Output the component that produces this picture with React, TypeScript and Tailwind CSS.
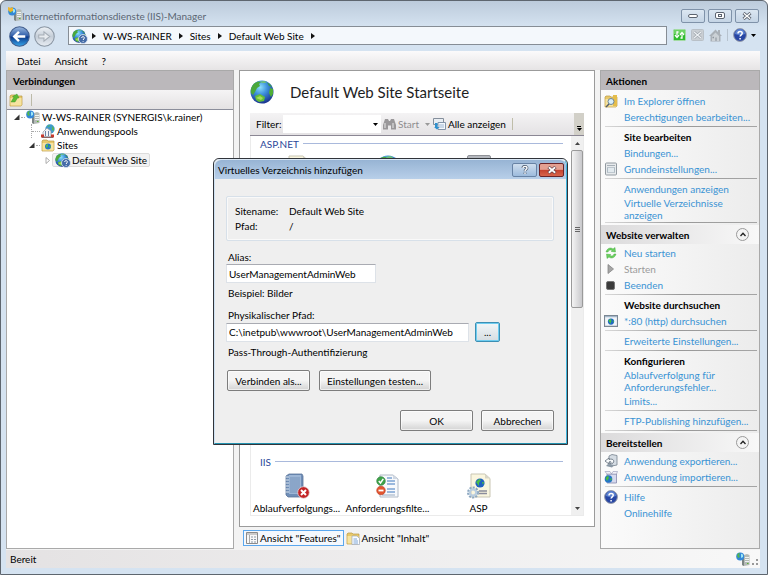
import type { ReactNode } from 'react';

function Globe({ className = 'size-4' }: { className?: string }) {
  return (
    <svg viewBox="0 0 24 24" className={`shrink-0 ${className}`} aria-hidden="true">
      <defs>
        <radialGradient id="sea" cx="0.42" cy="0.3" r="0.75">
          <stop offset="0" stopColor="#8fe0fa" />
          <stop offset="0.4" stopColor="#3f93de" />
          <stop offset="1" stopColor="#152a86" />
        </radialGradient>
      </defs>
      <circle cx="12" cy="12" r="11.5" fill="url(#sea)" />
      <path d="M1 13C0 8 3 3 8 1.5L11 2 9 4 10 6 7 8 5 12 3 15Z" fill="#4aa83c" />
      <path d="M10 1.5L14 1 17 2 15 3 12 3Z" fill="#6fc07a" />
      <path d="M17 2.5C20 4 21 5 22 7L19 6Z" fill="#3b9a48" />
      <path d="M20 8L23 9 23 14 21 17 19 13Z" fill="#4fae35" />
      <path d="M5 16L10 14 15 17 14 21 9 22 6 20Z" fill="#63be38" />
      <path d="M6 18L10 16 13 18 11 20Z" fill="#a5dd5b" />
    </svg>
  );
}

function SiteIcon({ className = 'size-3.5' }: { className?: string }) {
  return (
    <span className="relative flex shrink-0">
      <Globe className={className} />
      <svg viewBox="0 0 10 10" className="absolute -right-0.5 -bottom-px size-2.5" aria-hidden="true">
        <circle cx="5" cy="5" r="4.5" fill="#456ca8" stroke="#dfe8f4" strokeWidth="0.8" />
        <path d="M3.6 4C3.6 2.2 6.5 2.3 6.4 4 6.4 4.8 5.1 5 5.1 6M5.1 7v.8" fill="none" stroke="#fff" strokeWidth="1" />
      </svg>
    </span>
  );
}

function ServerIcon({ badge = false }: { badge?: boolean }) {
  return (
    <svg viewBox="0 0 14 14" className="size-3.5 shrink-0" aria-hidden="true">
      <path d="M6 3.5L11 2 13.5 3V13L8 14 6 13Z" fill="#b4bab6" />
      <path d="M6 3.5L8 4.2V14L6 13Z" fill="#7b8482" />
      <path d="M9 5.5H13M9 7.5H13M9 9.5H13" stroke="#eff2f0" />
      <path d="M11 11.5h1.5" stroke="#59b72f" />
      <circle cx="4.2" cy="4.4" r="4" fill="#3388d8" />
      <path d="M1 3Q3 0 4 1L3 3 4 5 2 6Z" fill="#53b64b" />
      <path d="M5 2Q6 1 7 3L7 5 5 6Z" fill="#9ce6f4" />
      {badge && <path d="M0 0L3 1 5 0 5 4 2 5 0 3Z" fill="#edb52e" />}
    </svg>
  );
}

function FolderIcon({ kind }: { kind: 'up' | 'site' | 'search' | 'content' }) {
  return (
    <svg viewBox="0 0 14 14" className="size-3.5 shrink-0" aria-hidden="true">
      <path d="M1 3L2 2H6L7 3H13V12L12 13H1Z" fill="#e8c96b" stroke="#b99945" strokeWidth="0.7" />
      <path d="M1.5 5H12.5V12.5H1.5Z" fill="#f6e3a0" />
      {kind === 'up' && <path d="M2 9L5 4 3.5 3.5 8 1 10 5 8.5 5 6 9Z" fill="#5cbb34" stroke="#338a25" strokeWidth="0.4" />}
      {kind === 'site' && (
        <>
          <circle cx="7" cy="8.5" r="3" fill="#2476c7" />
          <path d="M5 7L7 6 7 8 6 10 5 9ZM8 8L10 8 9 10Z" fill="#52bf42" />
        </>
      )}
      {kind === 'search' && (
        <>
          <path d="M9 1H13V12H9Z" fill="#e5bd4a" />
          <circle cx="7" cy="7.5" r="3" fill="#d8eefa" stroke="#6d8595" />
          <path d="M5 10L2 13" stroke="#525d66" strokeWidth="1.5" />
        </>
      )}
      {kind === 'content' && (
        <>
          <path d="M6 5H11L13.5 7.5V13.5H6Z" fill="#fafcff" stroke="#909db0" strokeWidth="0.6" />
          <path d="M7.5 8H11M7.5 10H12M7.5 12H12" stroke="#6193cb" strokeWidth="0.8" />
        </>
      )}
    </svg>
  );
}

function PoolsIcon() {
  return (
    <svg viewBox="0 0 14 14" className="size-3.5 shrink-0" aria-hidden="true">
      <circle cx="9" cy="5" r="4.7" fill="#3d9bcc" />
      <path d="M6 2L9 1 8 3ZM11 2L13 4 13 7 11 6Z" fill="#59b55c" />
      <path d="M2 8L6 4 10 7V12.5H2Z" fill="#f2f3f6" stroke="#8b929e" strokeWidth="0.7" />
      <path d="M4.5 7V12M7.5 7V12" stroke="#6b83a4" strokeWidth="1" />
      <path d="M0 10.5H3V13.5H0ZM10 10.5H13V13.5H10Z" fill="#c7392d" />
      <path d="M1 13.5H12" stroke="#8d6562" />
    </svg>
  );
}

function HelpIcon({ className = 'size-3.5' }: { className?: string }) {
  return (
    <svg viewBox="0 0 14 14" className={`shrink-0 ${className}`} aria-hidden="true">
      <circle cx="7" cy="7" r="6.4" fill="#2746a4" stroke="#969caa" strokeWidth="1" />
      <path d="M2 6A5 5 0 0 1 12 6Q7 8 2 6Z" fill="#5c82d0" />
      <path d="M5 5.5C5 2.8 9.3 2.9 9.2 5.3 9.2 6.8 7.1 6.9 7.1 8.6M7.1 10v1.4" fill="none" stroke="#fff" strokeWidth="1.5" />
    </svg>
  );
}

function DialogIcon() {
  return (
    <svg viewBox="0 0 12 13" className="h-3.5 w-3" aria-hidden="true">
      <rect x="0.5" y="0.5" width="11" height="12" rx="1" fill="#e8ebed" stroke="#929aa1" />
      <path d="M2 3H10" stroke="#a7b0b8" />
      <path d="M2.5 5H9.5V10H2.5Z" fill="#d5dfe6" stroke="#9ba9b3" strokeWidth="0.7" />
      <path d="M4 5V10M6 5V10M8 5V10" stroke="#f7fafb" strokeWidth="0.8" />
    </svg>
  );
}

function RestartIcon() {
  return (
    <svg viewBox="0 0 12 12" className="size-3" aria-hidden="true">
      <path d="M1 5C2 1 6 0 8 2L10 0.5 10.5 5 6.2 4.4 7.2 3.5C5 2.5 3.5 3.2 3 5ZM11 7C10 11 6 12 4 10L2 11.5 1.5 7 5.8 7.6 4.8 8.5C7 9.5 8.5 8.8 9 7Z" fill="#6bcf5f" stroke="#3aa535" strokeWidth="0.4" />
    </svg>
  );
}

function BrowseIcon() {
  return (
    <svg viewBox="0 0 13 11" className="h-3 w-3.5" aria-hidden="true">
      <path d="M0.5 0.5H12.5V10.5H0.5Z" fill="#f1f5f9" stroke="#7b8793" />
      <path d="M1 1.5H12" stroke="#9aafc4" />
      <circle cx="6.5" cy="6" r="2.9" fill="#2069c4" />
      <path d="M4 5L6 3.5 7 5 6 8ZM8 6L9 5 9 7Z" fill="#46c141" />
    </svg>
  );
}

function ExportIcon() {
  return (
    <svg viewBox="0 0 14 14" className="size-3.5" aria-hidden="true">
      <path d="M5 2L8 0.5 13 1.5V11L8 12 5 10Z" fill="#d5dce3" stroke="#76818d" strokeWidth="0.8" />
      <path d="M1 7L5 4V5.5C9 4 11 7 9 9 8 10 6 10 6 10 8 8 7 7 5 8V10Z" fill="#f8fafb" stroke="#5d6a77" strokeWidth="0.8" />
      <path d="M2 12L4 10 10 11 8 13.5Z" fill="#8a98a5" />
    </svg>
  );
}

function ImportIcon() {
  return (
    <svg viewBox="0 0 14 14" className="size-3.5" aria-hidden="true">
      <path d="M3 4H12.5V13H3Z" fill="#d6daee" stroke="#8588ac" strokeWidth="0.8" />
      <path d="M3 4L1 1.5H6L7.5 4 9 1.5H13.5L12.5 4Z" fill="#f1f1f8" stroke="#9497b4" strokeWidth="0.6" />
      <circle cx="4.5" cy="9" r="3.8" fill="#2575c8" />
      <path d="M1.5 8L4 5.5 5 8 3 11ZM6 9L8 8 7 11Z" fill="#4abc3c" />
    </svg>
  );
}

type Action = { label: string; icon?: ReactNode; bold?: boolean; disabled?: boolean; tall?: boolean };

const siteActions: Action[][] = [
  [{ label: 'Im Explorer öffnen', icon: <FolderIcon kind="search" /> }, { label: 'Berechtigungen bearbeiten...' }],
  [
    { label: 'Site bearbeiten', bold: true },
    { label: 'Bindungen...' },
    { label: 'Grundeinstellungen...', icon: <DialogIcon /> },
  ],
  [{ label: 'Anwendungen anzeigen' }, { label: 'Virtuelle Verzeichnisse anzeigen', tall: true }],
];

const manageActions: Action[][] = [
  [
    { label: 'Neu starten', icon: <RestartIcon /> },
    {
      label: 'Starten',
      disabled: true,
      icon: (
        <svg viewBox="0 0 8 10" className="h-2.5 w-2" aria-hidden="true">
          <path d="M1 0.5L6.5 5 1 9.5Z" fill="#a6a6a6" stroke="#858585" strokeWidth="0.8" />
        </svg>
      ),
    },
    { label: 'Beenden', icon: <span className="size-[9px] rounded-xs border border-[#777] bg-[#3b3b3b]" /> },
  ],
  [
    { label: 'Website durchsuchen', bold: true },
    { label: '*:80 (http) durchsuchen', icon: <BrowseIcon /> },
  ],
  [{ label: 'Erweiterte Einstellungen...' }],
  [
    { label: 'Konfigurieren', bold: true },
    { label: 'Ablaufverfolgung für Anforderungsfehler...', tall: true },
    { label: 'Limits...' },
  ],
  [{ label: 'FTP-Publishing hinzufügen...' }],
];

const deployActions: Action[][] = [
  [
    { label: 'Anwendung exportieren...', icon: <ExportIcon /> },
    { label: 'Anwendung importieren...', icon: <ImportIcon /> },
  ],
  [{ label: 'Hilfe', icon: <HelpIcon /> }, { label: 'Onlinehilfe' }],
];

function Divider() {
  return (
    <div className="mr-0.5 ml-1 h-1 pt-px">
      <div className="h-px bg-linear-to-r from-[#d8d8d8] via-[#999] to-[#a5a5a5]" />
    </div>
  );
}

function ActionGroups({ groups }: { groups: Action[][] }) {
  return groups.map((group, i) => (
    <div key={group[0].label}>
      {i > 0 && <Divider />}
      {group.map((action) => (
        <div key={action.label} className={`flex ${action.tall ? 'h-6 items-start' : 'h-4 items-center'}`}>
          <span className="flex w-[23px] shrink-0 justify-center pr-1">{action.icon}</span>
          {action.bold ? (
            <h3 className="font-bold text-black">{action.label}</h3>
          ) : action.disabled ? (
            <span className="text-[#9b9b9b]">{action.label}</span>
          ) : (
            <a href="#" className={`text-[#3a93d4] ${action.tall ? 'w-28' : 'whitespace-nowrap'}`}>
              {action.label}
            </a>
          )}
        </div>
      ))}
    </div>
  ));
}

function SectionHeader({ title }: { title: string }) {
  return (
    <>
      <Divider />
      <div className="mb-px flex h-[19px] items-center justify-between bg-linear-to-r from-[#dcdbdc] to-[#f8f8f8] pr-2.5 pl-[5px]">
        <h2 className="font-bold text-black">{title}</h2>
        <button aria-label={`${title} einklappen`} className="flex size-[13px] items-center justify-center rounded-full border border-[#9a9a9a] bg-[#f4f4f4]">
          <svg viewBox="0 0 6 5" className="h-[5px] w-1.5" aria-hidden="true">
            <path d="M0.5 4L3 1.2 5.5 4" fill="none" stroke="#222" strokeWidth="1.3" />
          </svg>
        </button>
      </div>
    </>
  );
}

function Caret({ className = 'text-black' }: { className?: string }) {
  return (
    <svg viewBox="0 0 5 3" className={`h-[3px] w-[5px] shrink-0 ${className}`} aria-hidden="true">
      <path d="M0 0H5L2.5 3Z" fill="currentColor" />
    </svg>
  );
}

function Crumb() {
  return (
    <svg viewBox="0 0 4 6" className="h-1.5 w-1 shrink-0" aria-hidden="true">
      <path d="M0 0L4 3 0 6Z" fill="#111" />
    </svg>
  );
}

function Expander({ open = false }: { open?: boolean }) {
  return (
    <svg viewBox="0 0 6 7" className="h-[7px] w-1.5 shrink-0" aria-hidden="true">
      {open ? <path d="M5.5 0.5V6H0Z" fill="#333" /> : <path d="M1 0.5L4.5 3.5 1 6.5Z" fill="#fff" stroke="#999" strokeWidth="0.8" />}
    </svg>
  );
}

function NavArrow({ back = false }: { back?: boolean }) {
  return (
    <button aria-label={back ? 'Zurück' : 'Vorwärts'} disabled={!back} className="shrink-0">
      <svg viewBox="0 0 20 20" className="size-[21px]" aria-hidden="true">
        <defs>
          <linearGradient id="back" x2="0" y2="1">
            <stop offset="0" stopColor="#9bb9df" />
            <stop offset="0.48" stopColor="#2e5ca9" />
            <stop offset="0.52" stopColor="#0b3789" />
            <stop offset="1" stopColor="#38a8ec" />
          </linearGradient>
          <linearGradient id="forward" x2="0" y2="1">
            <stop offset="0" stopColor="#eef2f6" />
            <stop offset="0.5" stopColor="#c5ced8" />
            <stop offset="1" stopColor="#e8edf3" />
          </linearGradient>
        </defs>
        <circle cx="10" cy="10" r="9.3" fill={back ? 'url(#back)' : 'url(#forward)'} stroke={back ? '#435f8e' : '#8995a2'} />
        {back ? (
          <path d="M15.5 10H5.5M9.5 5.5L5 10 9.5 14.5" fill="none" stroke="#fff" strokeWidth="2.3" />
        ) : (
          <path d="M4.5 8.5H9.5V5.5L15 10 9.5 14.5V11.5H4.5Z" fill="#e7ebef" stroke="#a5adb6" />
        )}
      </svg>
    </button>
  );
}

const frameButton =
  'flex h-3.5 w-6 items-center justify-center rounded-xs border border-[#7f92a9] bg-linear-to-b from-[#dce7f2] to-[#c4d4e5]';

function TitleBar() {
  return (
    <header className="flex h-[25px] items-center pr-2 pl-[7px]">
      <ServerIcon badge />
      <h1 className="flex-1 pt-1 text-[#5b6673]">Internetinformationsdienste (IIS)-Manager</h1>
      <div className="flex gap-[3px] pt-1">
        <button aria-label="Minimieren" className={frameButton}>
          <span className="h-1 w-2.5 rounded-xs border border-[#5c6470] bg-white" />
        </button>
        <button aria-label="Maximieren" className={frameButton}>
          <span className="flex h-[7px] w-2.5 items-center justify-center rounded-xs border border-[#5c6470] bg-white">
            <span className="h-[3px] w-1 border border-[#5c6470]" />
          </span>
        </button>
        <button aria-label="Schließen" className={frameButton}>
          <svg viewBox="0 0 10 8" className="h-2 w-2.5" aria-hidden="true">
            <path d="M1.5 1L8.5 7M8.5 1L1.5 7" stroke="#5c6470" strokeWidth="3" />
            <path d="M1.8 1.2L8.2 6.8M8.2 1.2L1.8 6.8" stroke="#fff" strokeWidth="1.3" />
          </svg>
        </button>
      </div>
    </header>
  );
}

function AddressBar() {
  return (
    <nav className="flex h-[25px] items-start pr-[11px] pl-2">
      <div className="flex gap-1">
        <NavArrow back />
        <NavArrow />
      </div>
      <div className="ml-[13px] flex h-[19px] flex-1 items-center border border-[#868d95] bg-[#f4f8fc] pl-[3px]">
        <SiteIcon />
        <div className="ml-1.5 flex items-center gap-[7px] text-black">
          <Crumb />
          <a href="#">W-WS-RAINER</a>
          <Crumb />
          <a href="#">Sites</a>
          <Crumb />
          <a href="#">Default Web Site</a>
          <Crumb />
        </div>
      </div>
      <div className="ml-1.5 flex h-[18px] items-center gap-[5px]">
        <button aria-label="Aktualisieren">
          <svg viewBox="0 0 13 12" className="h-3 w-[13px]" aria-hidden="true">
            <rect x="0.5" y="0.5" width="12" height="11" rx="1" fill="#2fbb2f" stroke="#a3dba2" />
            <path d="M1 1H12V5H1Z" fill="#6bd364" />
            <path d="M5.5 3H4V6.5M2 6L4 8.5 6 6M7.5 9H9V5.5M7 6L9 3.5 11 6" fill="none" stroke="#fff" strokeWidth="1.3" />
          </svg>
        </button>
        <button aria-label="Stopp" disabled>
          <svg viewBox="0 0 13 12" className="h-3 w-[13px]" aria-hidden="true">
            <rect x="0.5" y="0.5" width="12" height="11" rx="1" fill="#c9ced3" stroke="#b9c0c7" />
            <path d="M3 3L10 9M10 3L3 9" stroke="#9fa6ad" strokeWidth="2.6" />
            <path d="M3 3L10 9M10 3L3 9" stroke="#eef1f4" strokeWidth="1.2" />
          </svg>
        </button>
        <button aria-label="Startseite" disabled>
          <svg viewBox="0 0 13 13" className="size-[13px]" aria-hidden="true">
            <path d="M0 7L6.5 0.5 9 3V1H11V5L13 7 11.5 7V12.5H1.5V7Z" fill="#a9b0b7" />
            <path d="M3 7L6.5 3.5 10 7V12H8V8.5H6V12H3Z" fill="#cbd1d6" />
            <path d="M3.5 8.5H5" stroke="#8e969e" strokeWidth="1.5" />
          </svg>
        </button>
        <span className="h-3 w-px bg-[#b7c3cf]" />
        <button aria-label="Hilfe" className="flex items-center gap-1">
          <HelpIcon />
          <Caret />
        </button>
      </div>
    </nav>
  );
}

function Connections() {
  return (
    <section className="flex w-[228px] shrink-0 flex-col border border-[#a9a9a9] bg-white">
      <h2 className="flex h-[19px] items-center bg-[#bbb8bb] pl-1.5 font-bold text-black">Verbindungen</h2>
      <div className="flex h-5 items-center gap-2 border-b border-[#8b8e9b] bg-linear-to-b from-[#f5f4f5] to-[#e4e2e3] pl-0.5">
        <button aria-label="Verbinden">
          <FolderIcon kind="up" />
        </button>
        <span className="h-3 w-px bg-[#bcbaa8]" />
      </div>
      <ul className="text-black">
        <li className="flex h-3.5 items-center pl-[7px]">
          <Expander open />
          <span className="mr-px ml-px w-1 border-t border-dotted border-[#aaa]" />
          <ServerIcon />
          <span className="ml-0.5">W-WS-RAINER (SYNERGIS\k.rainer)</span>
        </li>
        <li className="flex h-3.5 items-center pl-6">
          <span className="h-3.5 border-l border-dotted border-[#aaa]" />
          <span className="mr-px w-2 border-t border-dotted border-[#aaa]" />
          <PoolsIcon />
          <span className="ml-0.5">Anwendungspools</span>
        </li>
        <li className="flex h-3.5 items-center pl-[22px]">
          <Expander open />
          <span className="mr-px ml-px w-1 border-t border-dotted border-[#aaa]" />
          <FolderIcon kind="site" />
          <span className="ml-0.5">Sites</span>
        </li>
        <li className="flex h-4 items-center pl-[38px]">
          <Expander />
          <span className="ml-px flex h-3.5 items-center rounded-xs border border-[#dcdcdc] bg-[#f2f2f2] pr-0.5 pl-0.5">
            <SiteIcon />
            <span className="ml-[3px]">Default Web Site</span>
          </span>
        </li>
      </ul>
    </section>
  );
}

function GroupTitle({ children }: { children: ReactNode }) {
  return (
    <h3 className="flex h-[15px] items-center gap-1 pr-2 pl-[9px] text-[#2b4799]">
      {children}
      <span className="h-px flex-1 bg-[#a9b9dc]" />
    </h3>
  );
}

function Feature({ label, icon }: { label: string; icon: ReactNode }) {
  return (
    <a href="#" className="flex w-[91px] flex-col items-center gap-[3px] text-black">
      {icon}
      <span className="h-3 whitespace-nowrap">{label}</span>
    </a>
  );
}

function TraceIcon() {
  return (
    <svg viewBox="0 0 26 26" className="size-[26px]" aria-hidden="true">
      <path d="M2 3L5 1H18L19 3V22L16 24H4L2 22Z" fill="#6f8eb7" stroke="#5b7399" strokeWidth="0.8" />
      <path d="M5 2H17V21H5Z" fill="#9db6d6" />
      <path d="M7 4V20M9 4V20M11 4V20M13 4V20M15 4V20" stroke="#7895bb" />
      <path d="M1.5 4H5M1.5 7H5M1.5 10H5M1.5 13H5M1.5 16H5M1.5 19H5" stroke="#dfe7f0" />
      <circle cx="19.5" cy="19.5" r="5.8" fill="#c32325" stroke="#e2d0d3" strokeWidth="0.8" />
      <path d="M17 17L22 22M22 17L17 22" stroke="#fff" strokeWidth="2" />
    </svg>
  );
}

function FilterIcon() {
  return (
    <svg viewBox="0 0 26 26" className="size-[26px]" aria-hidden="true">
      <path d="M5 2H18L23 6V24H5Z" fill="#f7f9fc" stroke="#b1bac6" />
      <path d="M18 2V6H23Z" fill="#cfd7e2" />
      <path d="M12 5H17M12 8H20M12 11H20M12 16H20M12 19H20" stroke="#3f79bd" strokeWidth="1.1" />
      <path d="M7 22H20" stroke="#9aabc0" />
      <circle cx="6" cy="8" r="4.3" fill="#3fa34a" stroke="#2c7c37" strokeWidth="0.6" />
      <path d="M3.8 8L5.5 10 8.3 5.8" fill="none" stroke="#fff" strokeWidth="1.5" />
      <circle cx="6" cy="17.5" r="4.3" fill="#e2552f" stroke="#ba3a22" strokeWidth="0.6" />
      <path d="M3.5 17.5H8.5" stroke="#fff" strokeWidth="1.8" />
    </svg>
  );
}

function AspIcon() {
  return (
    <svg viewBox="0 0 26 26" className="size-[26px]" aria-hidden="true">
      <path d="M5 1H19L24 5.5V24H5Z" fill="#faf6df" stroke="#c9c6b4" />
      <path d="M19 1V5.5H24Z" fill="#d7d5c7" />
      <circle cx="14" cy="10" r="4.6" fill="#2160c0" />
      <path d="M10 9L13 6 15 7 13 10 13 13ZM16 9L18 9 17 12Z" fill="#4abd47" />
      <path d="M13 18H21M13 20.5H21" stroke="#8b8d9c" strokeWidth="1.3" />
      <circle cx="7" cy="19.5" r="4.8" fill="none" stroke="#8ca7c0" strokeWidth="2.4" strokeDasharray="2 1.1" />
      <circle cx="7" cy="19.5" r="3.2" fill="none" stroke="#b9cddf" strokeWidth="2.2" />
    </svg>
  );
}

function FeatureView() {
  return (
    <main className="flex min-w-0 flex-1 flex-col">
      <div className="flex flex-1 flex-col border border-[#9b9b9b] bg-white pr-2.5 pb-2.5 pl-2.5">
        <div className="flex h-[42px] items-center gap-4">
          <Globe className="size-6" />
          <h2 className="text-[15px] text-[#1e1e1e]">Default Web Site Startseite</h2>
        </div>
        <div className="flex h-[23px] items-center border-b border-[#8b8794] bg-linear-to-b from-[#f4f3f4] to-[#e4e2e4] pl-1.5 text-black">
          <label htmlFor="filter" className="w-[27px]">Filter:</label>
          <input id="filter" className="h-[18px] w-[86px] bg-white px-1 outline-none" />
          <button aria-label="Filter auswählen" className="flex h-[18px] w-3 items-center justify-center bg-white">
            <Caret />
          </button>
          <button disabled className="ml-0.5 flex items-center gap-0.5 text-[#8f8d8f]">
            <svg viewBox="0 0 13 12" className="h-3 w-[13px]" aria-hidden="true">
              <path d="M1 4L2 1H5L6 3H7L8 1H11L12 4 13 7V11.5H8V7.5H5V11.5H0V7Z" fill="#9a989a" />
              <path d="M2 5V10M10 5V10" stroke="#d0ced0" strokeWidth="1.5" />
            </svg>
            Start
          </button>
          <span className="mr-[3px] ml-1.5 flex"><Caret className="text-[#999]" /></span>
          <button className="flex items-center gap-0.5">
            <svg viewBox="0 0 13 12" className="h-3 w-[13px]" aria-hidden="true">
              <path d="M0.5 0.5H10.5V6.5H0.5Z" fill="#e9eef3" stroke="#858f9c" />
              <path d="M5 4.5H12.5V11.5H5Z" fill="#f4f8fc" stroke="#8494a8" />
              <path d="M6 7H11M6 9H11" stroke="#8aa6c9" strokeWidth="0.8" />
              <path d="M2 5V9H1L4 11.5 6.5 9H4.5V5Z" fill="#2f91cf" />
            </svg>
            Alle anzeigen
          </button>
          <span className="ml-1.5 h-3 w-px bg-[#bfbda9]" />
          <button aria-label="Weitere Optionen" className="ml-auto flex h-full w-2.5 flex-col items-center justify-end gap-px bg-[#d2d0c8] pb-1">
            <span className="h-px w-1 bg-black" />
            <Caret />
          </button>
        </div>
        <div className="flex flex-1 border border-t-0 border-[#ebebeb]">
          <div className="flex min-w-0 flex-1 flex-col justify-between pb-px">
            <div>
              <GroupTitle>ASP.NET</GroupTitle>
              <div className="flex pt-1">
                <Feature label=".NET-Autorisierung" icon={<AspIcon />} />
                <Feature label=".NET-Globalisier..." icon={<Globe className="size-[26px]" />} />
                <Feature label=".NET-Kompilierung" icon={<span className="h-[26px] w-6 rounded-xs border border-[#8f9197] bg-[#b5b8be]" />} />
              </div>
            </div>
            <div>
              <GroupTitle>IIS</GroupTitle>
              <div className="flex pt-1">
                <Feature label="Ablaufverfolgungs..." icon={<TraceIcon />} />
                <Feature label="Anforderungsfilte..." icon={<FilterIcon />} />
                <Feature label="ASP" icon={<AspIcon />} />
              </div>
            </div>
          </div>
          <div className="flex w-3 flex-col items-center bg-[#f0f0f0]">
            <button aria-label="Nach oben" className="flex h-3.5 w-full items-center justify-center">
              <Caret className="rotate-180 text-[#444]" />
            </button>
            <div className="flex h-[158px] w-3 flex-col items-center justify-center gap-px rounded-xs border border-[#9a9a9a] bg-linear-to-r from-[#f4f4f4] to-[#c9c9cc]">
              <span className="h-px w-[5px] bg-[#666]" />
              <span className="h-px w-[5px] bg-[#666]" />
              <span className="h-px w-[5px] bg-[#666]" />
            </div>
            <button aria-label="Nach unten" className="mt-auto flex h-3.5 w-full items-center justify-center">
              <Caret className="text-[#444]" />
            </button>
          </div>
        </div>
      </div>
      <div className="flex h-[22px] items-center gap-0.5 pb-px pl-1 text-black">
        <button className="flex h-4 items-center gap-0.5 border border-[#5aa7ee] bg-[#f4f8fd] pr-0.5 pl-0.5">
          <svg viewBox="0 0 12 12" className="size-3" aria-hidden="true">
            <path d="M0.5 0.5H11.5V11.5H0.5Z" fill="#f8f8f8" stroke="#8a8a8a" />
            <path d="M1 2H11" stroke="#bbb" strokeWidth="1.5" />
            <path d="M3.5 3V11" stroke="#aaa" />
            <path d="M5 5H7M5 7.5H7M5 10H7M8 5H10M8 7.5H10M8 10H10" stroke="#8d9aa8" />
          </svg>
          Ansicht "Features"
        </button>
        <button className="flex items-center gap-0.5">
          <FolderIcon kind="content" />
          Ansicht "Inhalt"
        </button>
      </div>
    </main>
  );
}

function Actions() {
  return (
    <aside className="w-40 shrink-0 border border-[#a9a9a9] bg-linear-to-r from-[#fbfbfb] to-[#ececec]">
      <h2 className="mb-[3px] flex h-[19px] items-center bg-[#bbb8bb] pl-[5px] font-bold text-black">Aktionen</h2>
      <ActionGroups groups={siteActions} />
      <SectionHeader title="Website verwalten" />
      <ActionGroups groups={manageActions} />
      <SectionHeader title="Bereitstellen" />
      <ActionGroups groups={deployActions} />
    </aside>
  );
}

const dialogButton =
  'flex h-[21px] items-center justify-center rounded-xs border border-[#7d7d7d] bg-linear-to-b from-[#f4f4f4] from-50% to-[#d4d4d4] inset-ring inset-ring-white/60';
const textBox = 'block h-[19px] border border-[#dde2e8] border-t-[#a9abb2] bg-white px-0.5 outline-none';

function AddDirectoryDialog() {
  return (
    <div
      role="dialog"
      aria-labelledby="dialog-title"
      className="absolute top-[157px] left-[212px] flex w-[355px] flex-col rounded-t-md border border-[#30343a] bg-[#efefef] text-black"
    >
      <div className="rounded-t-md border border-t-[#dbe8f5] border-r-[#3fb5dc] border-b-[#2493b0] border-l-[#cfe2f3]">
        <div className="flex h-[19px] items-center justify-between rounded-t-md bg-linear-to-b from-[#97b4d4] to-[#b8cfe9] pr-0.5 pl-[3px]">
          <h2 id="dialog-title">Virtuelles Verzeichnis hinzufügen</h2>
          <div className="flex gap-0.5">
            <button aria-label="Hilfe" className="flex h-3.5 w-[25px] items-center justify-center rounded-xs border border-[#6883a5] bg-linear-to-b from-[#cfdeee] to-[#9dbbdc]">
              <svg viewBox="0 0 8 10" className="h-2.5 w-2" aria-hidden="true">
                <path d="M2 3C2 0.8 6 0.8 6 3 6 4.5 4 4.6 4 6.2M4 7.5V9" fill="none" stroke="#4f5e73" strokeWidth="2.8" />
                <path d="M2 3C2 0.8 6 0.8 6 3 6 4.5 4 4.6 4 6.2M4 7.5V9" fill="none" stroke="#fff" strokeWidth="1.4" />
              </svg>
            </button>
            <button aria-label="Schließen" className="flex h-3.5 w-[25px] items-center justify-center rounded-xs border border-[#6a2428] bg-linear-to-b from-[#e3a091] from-45% via-[#c4412e] via-50% to-[#d7654c]">
              <svg viewBox="0 0 10 8" className="h-2 w-2.5" aria-hidden="true">
                <path d="M1.5 1L8.5 7M8.5 1L1.5 7" stroke="#5d3a41" strokeWidth="3.2" />
                <path d="M1.8 1.2L8.2 6.8M8.2 1.2L1.8 6.8" stroke="#fff" strokeWidth="1.8" />
              </svg>
            </button>
          </div>
        </div>
        <form className="pt-[17px] pr-3 pb-3 pl-[11px]">
          <dl className="grid h-[45px] grid-cols-[54px_1fr] content-center rounded-xs border border-[#d7e0e9] pl-2 leading-[15px] inset-ring inset-ring-white/60">
            <dt>Sitename:</dt>
            <dd>Default Web Site</dd>
            <dt>Pfad:</dt>
            <dd>/</dd>
          </dl>
          <label htmlFor="alias" className="mt-2 block h-[15px] pl-0.5 leading-4">Alias:</label>
          <input id="alias" defaultValue="UserManagementAdminWeb" className={`w-[150px] ${textBox}`} />
          <p className="mt-0.5 h-4 pl-0.5 leading-4">Beispiel: Bilder</p>
          <label htmlFor="path" className="mt-1.5 block h-[15px] pl-0.5 leading-4">Physikalischer Pfad:</label>
          <div className="flex items-center gap-1.5">
            <input id="path" defaultValue="C:\inetpub\wwwroot\UserManagementAdminWeb" className={`w-[243px] ${textBox}`} />
            <button type="button" aria-label="Durchsuchen" className="flex h-5 w-[25px] items-center justify-center rounded-xs border border-[#3c8fb4] bg-linear-to-b from-[#f2f6f8] to-[#d5dde2] inset-ring inset-ring-[#6fcdf0]">
              ...
            </button>
          </div>
          <p className="mt-0.5 h-4 pl-0.5 leading-4">Pass-Through-Authentifizierung</p>
          <div className="mt-2.5 flex gap-[9px] pl-px">
            <button type="button" className={`w-[83px] ${dialogButton}`}>Verbinden als...</button>
            <button type="button" className={`w-28 ${dialogButton}`}>Einstellungen testen...</button>
          </div>
          <div className="mt-[19px] flex justify-end gap-2">
            <button type="submit" className={`w-[73px] ${dialogButton}`}>OK</button>
            <button type="button" className={`w-[73px] ${dialogButton}`}>Abbrechen</button>
          </div>
        </form>
      </div>
    </div>
  );
}

export default function App() {
  return (
    <div className="relative flex min-h-screen flex-col rounded-t-md border border-[#5e666f] bg-[#d5e3f1] bg-linear-to-b from-[#bccbdb] to-[#d5e3f1] to-[26px] pb-1.5 font-['Lato',sans-serif] text-[10px] leading-3">
      <TitleBar />
      <AddressBar />
      <div className="mr-[7px] ml-[5px] flex flex-1 flex-col bg-[#f3f3f3]">
        <div className="flex h-[19px] items-center gap-3.5 bg-linear-to-b from-[#fbfafb] to-[#e6e4e5] pl-[11px] text-black">
          <button>Datei</button>
          <button>Ansicht</button>
          <button>?</button>
        </div>
        <div className="flex flex-1 gap-[5px]">
          <Connections />
          <FeatureView />
          <Actions />
        </div>
        <footer className="mt-px flex h-[18px] items-center justify-between bg-linear-to-r from-[#e4e2e3] to-[#f8f8f8] pr-px pl-1 text-black">
          Bereit
          <span className="flex items-end gap-0.5">
            <ServerIcon />
            <svg viewBox="0 0 7 7" className="size-[7px]" aria-hidden="true">
              <path d="M4 0H6V2H4ZM4 4H6V6H4ZM0 4H2V6H0Z" fill="#999" />
            </svg>
          </span>
        </footer>
      </div>
      <AddDirectoryDialog />
    </div>
  );
}
